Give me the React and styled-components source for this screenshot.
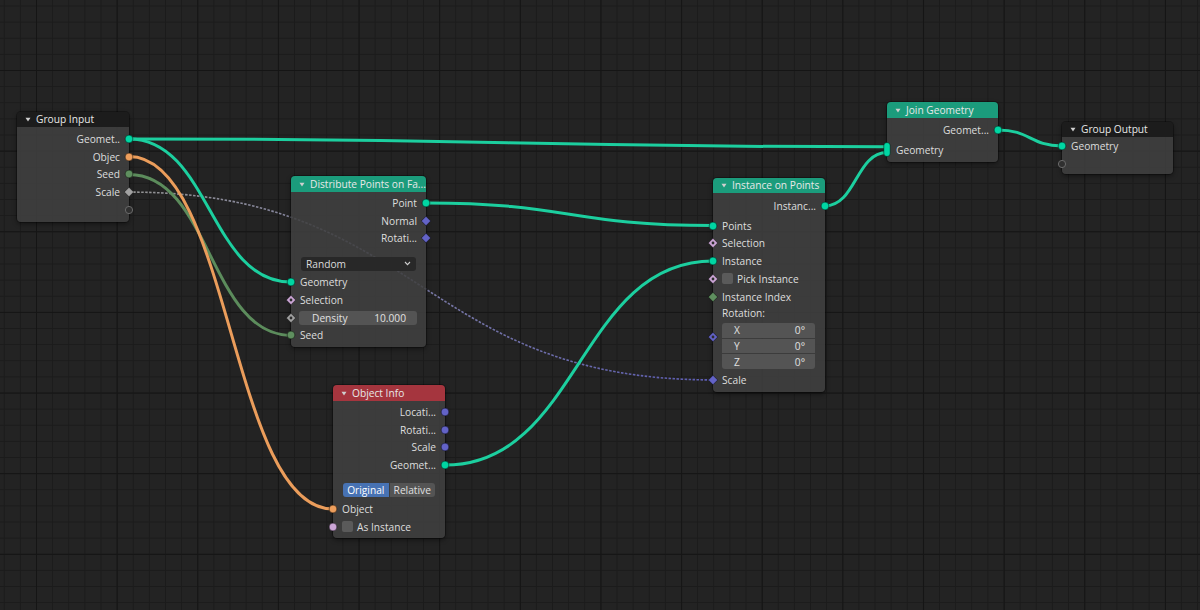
import React from "react";
import styled, { createGlobalStyle } from "styled-components";

const GlobalStyle = createGlobalStyle`
  html, body {
    margin: 0;
    padding: 0;
    background: #232323;
  }
  body {
    font-family: "Open Sans", "Noto Sans", "DejaVu Sans", sans-serif;
  }
`;

const COLORS = {
  geometry: "#00d6a3",
  object: "#ed9e5c",
  int: "#5f8f5f",
  float: "#a1a1a1",
  vector: "#6363c7",
  bool: "#cca6d6",
};

const Canvas = styled.div`
  position: relative;
  width: 1200px;
  height: 610px;
  overflow: hidden;
  background-color: #232323;
  background-image: linear-gradient(to right, #151515 1px, transparent 1px),
    linear-gradient(to bottom, #151515 1px, transparent 1px),
    linear-gradient(to right, #1b1b1b 1px, transparent 1px),
    linear-gradient(to bottom, #1b1b1b 1px, transparent 1px);
  background-size: 80.65px 80.65px, 80.65px 80.65px, 16.13px 16.13px,
    16.13px 16.13px;
  background-position: 36px 0, 0 70px, 36px 0, 0 70px;
`;

const Links = styled.svg`
  position: absolute;
  inset: 0;
  width: 1200px;
  height: 610px;
`;

const NodeBox = styled.div`
  position: absolute;
  left: ${(p) => p.$x}px;
  top: ${(p) => p.$y}px;
  width: ${(p) => p.$w}px;
  border-radius: 4px;
  box-shadow: 0 2px 5px rgba(0, 0, 0, 0.45), 0 0 0 1px rgba(0, 0, 0, 0.3);
  color: #dedede;
  font-size: 10.2px;
  line-height: 1;
`;

const Header = styled.div`
  height: ${(p) => p.$h}px;
  background: ${(p) => p.$color};
  border-radius: 4px 4px 0 0;
  display: flex;
  align-items: center;
  gap: 5px;
  padding-left: ${(p) => p.$pl || 8}px;
  color: #e8e8e8;
  white-space: nowrap;
  overflow: hidden;
`;

const Arrow = styled.svg`
  width: 6px;
  height: 5px;
  flex: none;
`;

const Body = styled.div`
  background: rgba(64, 64, 64, 0.88);
  border-radius: 0 0 4px 4px;
  padding: ${(p) => p.$pt}px 0 ${(p) => p.$pb}px;
  display: flex;
  flex-direction: column;
`;

const Row = styled.div`
  position: relative;
  height: ${(p) => p.$h || 17.75}px;
  margin-top: ${(p) => p.$mt || 0}px;
  display: flex;
  align-items: center;
  justify-content: ${(p) => (p.$out ? "flex-end" : "flex-start")};
  padding: 0 ${(p) => (p.$out ? 9 : 0)}px 0 ${(p) => (p.$out ? 0 : 9)}px;
  white-space: nowrap;
`;

const SocketIcon = styled.svg`
  position: absolute;
  top: 50%;
  ${(p) => (p.$side === "right" ? "right: -6px;" : "left: -6px;")}
  width: 12px;
  height: ${(p) => p.$h || 12}px;
  margin-top: ${(p) => -(p.$h || 12) / 2}px;
  overflow: visible;
`;

const SelectBox = styled.div`
  flex: 1;
  height: 14px;
  margin: 0 10px;
  padding: 0 5px;
  background: #282828;
  border-radius: 3px;
  display: flex;
  align-items: center;
  justify-content: space-between;
  color: #dcdcdc;
`;

const NumberField = styled.div`
  flex: 1;
  height: 14px;
  margin: 0 9px 0 8px;
  padding: 0 11px 0 13px;
  background: #545454;
  border-radius: 3px;
  display: flex;
  align-items: center;
  justify-content: space-between;
  color: #e0e0e0;
`;

const Check = styled.span`
  width: 11px;
  height: 11px;
  border-radius: 2px;
  background: #5a5a5a;
  margin-right: 4px;
  flex: none;
`;

const VectorBlock = styled.div`
  position: relative;
  padding: 0 10px 0 9px;
  display: flex;
  flex-direction: column;
`;

const BlockLabel = styled.div`
  height: 16px;
  display: flex;
  align-items: center;
`;

const VectorField = styled.div`
  margin-top: 1.5px;
  height: 46px;
  display: flex;
  flex-direction: column;
  gap: 1px;
  border-radius: 3px;
  overflow: hidden;
`;

const VectorCell = styled.div`
  flex: 1;
  background: #545454;
  display: flex;
  align-items: center;
  justify-content: space-between;
  padding: 0 10px 0 12px;
  color: #e0e0e0;
`;

const Toggle = styled.div`
  flex: 1;
  height: 14px;
  margin: 0 10px;
  display: flex;
  gap: 1px;
  border-radius: 3px;
  overflow: hidden;
`;

const ToggleOption = styled.div`
  flex: 1;
  display: flex;
  align-items: center;
  justify-content: center;
  background: ${(p) => (p.$active ? "#4772b3" : "#545454")};
  color: ${(p) => (p.$active ? "#ffffff" : "#e0e0e0")};
`;

function Socket({ type, shape = "circle", dot, side = "left" }) {
  const fill = COLORS[type];
  const edge = "rgba(0,0,0,0.6)";
  if (shape === "multi") {
    return (
      <SocketIcon $side={side} $h={15} viewBox="0 0 12 15">
        <rect x="2.8" y="0.5" width="6.4" height="14" rx="3.2" fill={fill} stroke={edge} strokeWidth="0.8" />
      </SocketIcon>
    );
  }
  return (
    <SocketIcon $side={side} viewBox="0 0 12 12">
      {shape === "circle" && (
        <circle cx="6" cy="6" r="3.9" fill={fill} stroke={edge} strokeWidth="0.8" />
      )}
      {shape === "empty" && (
        <circle cx="6" cy="6" r="3.6" fill="#303030" stroke="#6a6a6a" strokeWidth="1" />
      )}
      {shape === "diamond" && (
        <polygon points="6,1.3 10.7,6 6,10.7 1.3,6" fill={fill} stroke={edge} strokeWidth="0.8" />
      )}
      {dot && <circle cx="6" cy="6" r="1.4" fill="#2e2e2e" />}
    </SocketIcon>
  );
}

function Node({ x, y, w, title, color, headerH = 16, pt, pb, children }) {
  return (
    <NodeBox $x={x} $y={y} $w={w}>
      <Header $h={headerH} $color={color}>
        <Arrow viewBox="0 0 6 5">
          <polygon points="0.5,0.8 5.5,0.8 3,4.4" fill="#cfcfcf" />
        </Arrow>
        {title}
      </Header>
      <Body $pt={pt} $pb={pb}>
        {children}
      </Body>
    </NodeBox>
  );
}

const curve = (x1, y1, x2, y2) => {
  const h = Math.abs(x2 - x1) * 0.5;
  return `M${x1},${y1} C${x1 + h},${y1} ${x2 - h},${y2} ${x2},${y2}`;
};

const LINKS = [
  { d: curve(129, 192.1, 713, 379.9), dashed: true },
  { d: curve(129, 174.4, 291, 335.4), color: "#5c8c5c" },
  { d: curve(129, 156.6, 333, 509.1), color: "#eb9d5b" },
  { d: curve(129, 138.9, 291, 282.1), color: "#1ccf9f" },
  { d: curve(129, 138.9, 887, 146.8), color: "#1ccf9f" },
  { d: curve(426, 202.9, 713, 225.6), color: "#1ccf9f" },
  { d: curve(445, 465.1, 713, 261.1), color: "#1ccf9f" },
  { d: curve(825, 205.9, 887, 152.6), color: "#1ccf9f" },
  { d: curve(998, 129.9, 1062, 145.9), color: "#1ccf9f" },
];

function LinkLayer() {
  return (
    <Links viewBox="0 0 1200 610">
      <defs>
        <linearGradient id="scaleLink" gradientUnits="userSpaceOnUse" x1="129" y1="0" x2="713" y2="0">
          <stop offset="0" stopColor="#a8a8a8" />
          <stop offset="1" stopColor="#6666cc" />
        </linearGradient>
      </defs>
      {LINKS.map((l, i) =>
        l.dashed ? (
          <path key={i} d={l.d} fill="none" stroke="url(#scaleLink)" strokeWidth="1.6" strokeDasharray="2.5 1.5" opacity="0.85" />
        ) : (
          <path key={i} d={l.d} fill="none" stroke={l.color} strokeWidth="3" strokeLinecap="round" />
        )
      )}
    </Links>
  );
}

const TEAL = "#1b9c7c";
const DARK = "#1c1c1c";
const RED = "#a5353e";

export default function App() {
  return (
    <>
      <GlobalStyle />
      <Canvas>
        <LinkLayer />

        <Node x={17} y={112} w={112} title="Group Input" color={DARK} headerH={15} pt={3} pb={3}>
          <Row $out>
            Geomet..
            <Socket type="geometry" side="right" />
          </Row>
          <Row $out>
            Objec
            <Socket type="object" side="right" />
          </Row>
          <Row $out>
            Seed
            <Socket type="int" side="right" />
          </Row>
          <Row $out>
            Scale
            <Socket type="float" shape="diamond" side="right" />
          </Row>
          <Row $out>
            <Socket shape="empty" side="right" />
          </Row>
        </Node>

        <Node x={291} y={176} w={135} title="Distribute Points on Fa..." color={TEAL} pt={2} pb={3}>
          <Row $out>
            Point
            <Socket type="geometry" side="right" />
          </Row>
          <Row $out>
            Normal
            <Socket type="vector" shape="diamond" side="right" />
          </Row>
          <Row $out>
            Rotati...
            <Socket type="vector" shape="diamond" side="right" />
          </Row>
          <Row $mt={7} $h={19} style={{ padding: 0 }}>
            <SelectBox>
              Random
              <svg width="7" height="5" viewBox="0 0 7 5">
                <polyline points="1,1 3.5,3.6 6,1" fill="none" stroke="#cfcfcf" strokeWidth="1.1" />
              </svg>
            </SelectBox>
          </Row>
          <Row>
            <Socket type="geometry" />
            Geometry
          </Row>
          <Row>
            <Socket type="bool" shape="diamond" dot />
            Selection
          </Row>
          <Row style={{ padding: 0 }}>
            <Socket type="float" shape="diamond" dot />
            <NumberField>
              <span>Density</span>
              <span>10.000</span>
            </NumberField>
          </Row>
          <Row>
            <Socket type="int" />
            Seed
          </Row>
        </Node>

        <Node x={713} y={178} w={112} title="Instance on Points" color={TEAL} headerH={15} pt={4} pb={3}>
          <Row $out>
            Instanc...
            <Socket type="geometry" side="right" />
          </Row>
          <Row $mt={2}>
            <Socket type="geometry" />
            Points
          </Row>
          <Row>
            <Socket type="bool" shape="diamond" dot />
            Selection
          </Row>
          <Row>
            <Socket type="geometry" />
            Instance
          </Row>
          <Row>
            <Socket type="bool" shape="diamond" dot />
            <Check />
            Pick Instance
          </Row>
          <Row>
            <Socket type="int" shape="diamond" />
            Instance Index
          </Row>
          <VectorBlock>
            <Socket type="vector" shape="diamond" dot />
            <BlockLabel>Rotation:</BlockLabel>
            <VectorField>
              {["X", "Y", "Z"].map((axis) => (
                <VectorCell key={axis}>
                  <span>{axis}</span>
                  <span>0°</span>
                </VectorCell>
              ))}
            </VectorField>
          </VectorBlock>
          <Row $mt={2}>
            <Socket type="vector" shape="diamond" />
            Scale
          </Row>
        </Node>

        <Node x={333} y={385} w={112} title="Object Info" color={RED} pt={2} pb={2.5}>
          <Row $out>
            Locati...
            <Socket type="vector" side="right" />
          </Row>
          <Row $out>
            Rotati...
            <Socket type="vector" side="right" />
          </Row>
          <Row $out>
            Scale
            <Socket type="vector" side="right" />
          </Row>
          <Row $out>
            Geomet...
            <Socket type="geometry" side="right" />
          </Row>
          <Row $mt={7} style={{ padding: 0 }}>
            <Toggle>
              <ToggleOption $active>Original</ToggleOption>
              <ToggleOption>Relative</ToggleOption>
            </Toggle>
          </Row>
          <Row $mt={1.5}>
            <Socket type="object" />
            Object
          </Row>
          <Row>
            <Socket type="bool" />
            <Check />
            As Instance
          </Row>
        </Node>

        <Node x={887} y={102} w={111} title="Join Geometry" color={TEAL} pt={3} pb={3.5}>
          <Row $out>
            Geomet...
            <Socket type="geometry" side="right" />
          </Row>
          <Row $mt={2}>
            <Socket type="geometry" shape="multi" />
            Geometry
          </Row>
        </Node>

        <Node x={1062} y={122} w={111} title="Group Output" color={DARK} headerH={15} pt={0} pb={1.5}>
          <Row>
            <Socket type="geometry" />
            Geometry
          </Row>
          <Row>
            <Socket shape="empty" />
          </Row>
        </Node>
      </Canvas>
    </>
  );
}
